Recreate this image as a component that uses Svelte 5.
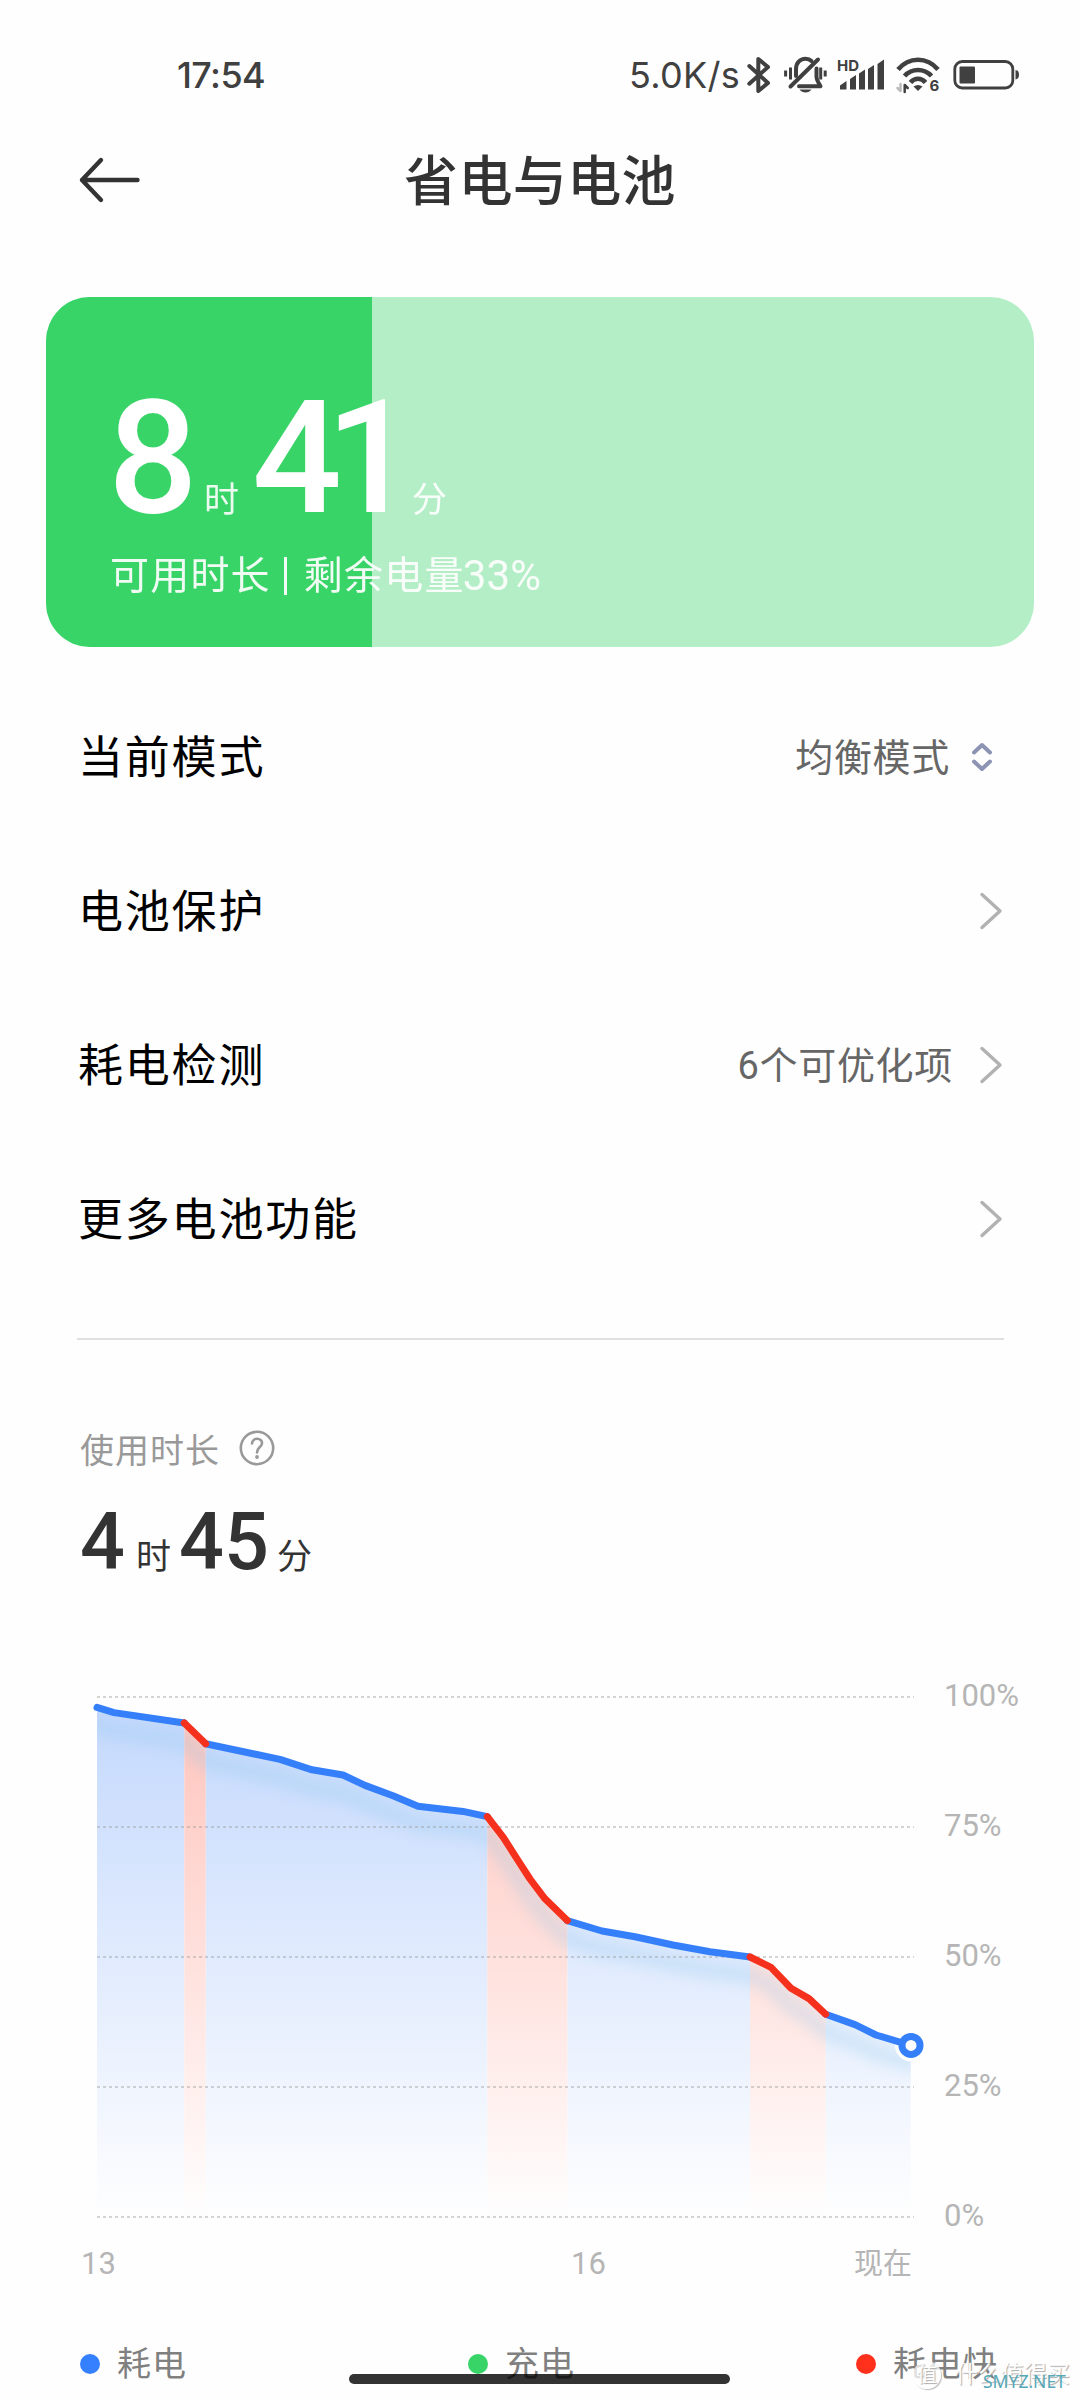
<script lang="ts">
    type Point = [number, number];
    type Segment = { fast: boolean; points: Point[] };

    const level = 33;

    const rows = [
        { label: '当前模式', value: '均衡模式', picker: true },
        { label: '电池保护', value: '', picker: false },
        { label: '耗电检测', value: '6个可优化项', picker: false },
        { label: '更多电池功能', value: '', picker: false },
    ];

    const ticks = [100, 75, 50, 25, 0];

    const legend = [
        { label: '耗电', kind: 'normal' },
        { label: '充电', kind: 'charge' },
        { label: '耗电快', kind: 'fast' },
    ];

    // [x in the plot, battery percent]
    const segments: Segment[] = [
        { fast: false, points: [[7, 98], [24, 97], [94.3, 95]] },
        { fast: false, points: [[115.7, 91], [190, 88], [222, 86], [253, 85], [275, 83], [303, 81], [328, 79], [373, 78], [397.3, 77]] },
        { fast: false, points: [[477.3, 57], [512, 55], [545, 53.9], [583, 52.3], [620, 51], [660, 50]] },
        { fast: false, points: [[735.7, 39], [765, 37], [786, 35], [820.7, 33]] },
        { fast: true, points: [[94.3, 95], [115.7, 91]] },
        { fast: true, points: [[397.3, 77], [413.3, 73], [428.3, 68.5], [440, 65], [455, 61.2], [477.3, 57]] },
        { fast: true, points: [[660, 50], [681, 48], [701, 44], [719, 42], [735.7, 39]] },
    ];

    const y = (percent: number) => 15 + (100 - percent) * 5.2;
    const line = (points: Point[]) => points.map(([px, p]) => `${px},${y(p)}`).join(' ');
    const area = (points: Point[]) =>
        `${points[0][0]},${y(0)} ${line(points)} ${points[points.length - 1][0]},${y(0)}`;

    const whole = segments
        .flatMap((s) => s.points)
        .sort((a, b) => a[0] - b[0]);
</script>

<div class="screen">
    <div class="status">
        <span class="time">17:54</span>
        <span class="speed">5.0K/s</span>
        <svg class="bluetooth" width="24" height="36" viewBox="0 0 24 36">
            <path d="M2.3 9 21 26 11.3 34V2l9.7 8L2.3 26.7" />
        </svg>
        <svg class="bell" width="43" height="36" viewBox="0 0 43 36">
            <path d="M6.5 29.5 34 2.5" />
            <path d="M12 19v-7c0-6 4-10.300 9.500-10.300 2.500 0 4.500.800 6 2.300" />
            <path d="M32.500 11.500V20c0 4 2.500 6 4 9.300H15" />
            <path class="solid" d="M15.500 32.500h12c-1.500 2-3.500 3-6 3s-4.500-1-6-3z" />
            <path class="thin" d="M1.600 13.500v6M6.500 10.500v12M36.700 10.500v12M41.200 13.500v6" />
        </svg>
        <svg class="signal" width="48" height="36" viewBox="0 0 48 36">
            <text x="-1" y="14">HD</text>
            <path class="solid" d="M2 32.500v-4l6.500-4.500v8.500zM12 32.500V22l6-4v14.500zM21 32.500v-16l6-4v20zM30 32.500V12l6-4v24.500zM39.500 32.500V7l6.500-4.500v30z" />
        </svg>
        <svg class="wifi" width="44" height="36" viewBox="0 0 44 36">
            <path class="wave" d="M2 12.500C13-.500 31-.500 42 12.500M8.500 19c7.500-8 19.500-8 27 0M14.500 25.500c4-5 11-5 15 0" />
            <path class="solid" d="M17.500 29.500c3-2 6-2 9 0L22 34z" />
            <path class="faint" d="M4.500 27v7L1.500 31" />
            <path class="arrow" d="M8.700 35v-7l3 3" />
            <text x="33.500" y="34">6</text>
        </svg>
        <svg class="battery" width="68" height="36" viewBox="0 0 68 36">
            <rect x="2.800" y="4.500" width="58" height="26.500" rx="7.500" />
            <rect class="solid" x="7.500" y="9.500" width="15.500" height="17" rx="1" />
            <path class="solid" d="M63.500 13c2.500.500 3.500 2 3.500 4.700s-1 4.300-3.500 4.800z" />
        </svg>
    </div>

    <header>
        <svg width="62" height="46" viewBox="0 0 62 46">
            <path d="M22 3 3 23l19 20M3 23h55.500" />
        </svg>
        <h1>省电与电池</h1>
    </header>

    <section class="card">
        <div class="fill" style="width: {level}%"></div>
        <div class="remaining">
            <span class="big">8</span>
            <span class="unit">时</span>
            <span class="big minutes">41</span>
            <span class="unit last">分</span>
        </div>
        <p>可用时长<span class="bar"></span>剩余电量<span class="percent">{level}%</span></p>
    </section>

    <ul class="rows">
        {#each rows as row}
            <li>
                <span class="label">{row.label}</span>
                <span class="value">{row.value}</span>
                {#if row.picker}
                    <svg class="updown" width="20" height="32" viewBox="0 0 20 32">
                        <path d="M2 11.500 10 4l8 7.500M2 20.500l8 7.500 8-7.500" />
                    </svg>
                {:else}
                    <svg class="chevron" width="24" height="40" viewBox="0 0 24 40">
                        <path d="M3 3.500 21 20 3 36.500" />
                    </svg>
                {/if}
            </li>
        {/each}
    </ul>

    <section class="usage">
        <div class="caption">
            使用时长
            <svg width="36" height="36" viewBox="0 0 36 36">
                <circle cx="18" cy="18" r="16.200" />
                <path d="M13 13.500c.300-6.500 10.500-6 10 0-.300 3.500-5 4-5 9" />
                <circle class="dot" cx="18" cy="27" r="1.900" />
            </svg>
        </div>
        <div class="duration">
            <span class="num">4</span>
            <span class="unit">时</span>
            <span class="num second">45</span>
            <span class="unit last">分</span>
        </div>
    </section>

    <section class="chart">
        <div class="plot">
            <svg width="850" height="550" viewBox="0 0 850 550">
                <defs>
                    <linearGradient id="blue" gradientUnits="userSpaceOnUse" x1="0" y1="15" x2="0" y2="535">
                        <stop offset="0" stop-color="#c3d8fd" />
                        <stop offset="1" stop-color="#fefefe" />
                    </linearGradient>
                    <linearGradient id="red" gradientUnits="userSpaceOnUse" x1="0" y1="15" x2="0" y2="535">
                        <stop offset="0" stop-color="#ffc3bb" />
                        <stop offset="1" stop-color="#fefefe" />
                    </linearGradient>
                    <filter id="soft" x="-5%" y="-10%" width="110%" height="130%">
                        <feGaussianBlur stdDeviation="7" />
                    </filter>
                    <clipPath id="under">
                        <polygon points={area(whole)} />
                    </clipPath>
                </defs>

                {#each segments as segment}
                    <polygon points={area(segment.points)} fill={segment.fast ? 'url(#red)' : 'url(#blue)'} />
                {/each}
                <g clip-path="url(#under)">
                    <polyline class="shadow" points={line(whole)} filter="url(#soft)" transform="translate(0 18)" />
                </g>
                {#each ticks as tick}
                    <path class="grid" d="M7 {y(tick)}H824" />
                {/each}
                <circle class="halo" cx="821" cy={y(level)} r="16" />
                {#each segments as segment}
                    <polyline class="line" class:fast={segment.fast} points={line(segment.points)} />
                {/each}
                <circle class="marker" cx="821" cy={y(level)} r="9" />
            </svg>
            <div class="y-axis">
                {#each ticks as tick}
                    <span>{tick}%</span>
                {/each}
            </div>
        </div>
        <div class="x-axis">
            <span>13</span>
            <span>16</span>
            <span class="now">现在</span>
        </div>
        <div class="legend">
            {#each legend as item}
                <span class="item"><i class={item.kind}></i>{item.label}</span>
            {/each}
        </div>
    </section>

    <div class="home"></div>

    <div class="watermark">
        <span class="badge">值</span>
        <span class="site">什么值得买</span>
        <span class="domain">SMYZ.NET</span>
    </div>
</div>

<style>
    :global(body) {
        background: #fefefe;
    }

    .screen {
        position: relative;
        display: flex;
        flex-direction: column;
        width: 1080px;
        height: 2400px;
        overflow: hidden;
        background: #fefefe;
        color: #333;
        font-family: Roboto, "Noto Sans CJK SC", sans-serif;
    }

    svg {
        flex: none;
        display: block;
        overflow: visible;
        fill: none;
        stroke-linecap: round;
        stroke-linejoin: round;
    }

    .status {
        display: flex;
        align-items: center;
        box-sizing: border-box;
        height: 100px;
        padding: 50px 60px 0 177px;
        color: #404040;
        font-family: Inter, sans-serif;
        font-size: 36px;
        line-height: 50px;

        & svg {
            stroke: #404040;
            stroke-width: 4;
        }

        & text {
            fill: #404040;
            stroke: none;
            font-size: 15px;
            font-weight: 700;
        }

        & .solid {
            fill: #404040;
            stroke: none;
        }
    }

    .time {
        width: 452px;
        font-weight: 500;
        letter-spacing: -0.6px;
    }

    .speed {
        width: 118px;
        letter-spacing: 0.3px;
        white-space: nowrap;
    }

    .bell {
        margin-left: 13px;

        & .thin {
            stroke-width: 3;
            stroke-linecap: butt;
        }
    }

    .signal {
        margin-left: 11px;
    }

    .wifi {
        margin-left: 10px;

        & .wave {
            stroke-width: 4.6;
            stroke-linecap: butt;
        }

        & .faint {
            stroke: #bbb;
            stroke-width: 2.5;
        }

        & .arrow {
            stroke-width: 2.5;
        }
    }

    .battery {
        margin-left: 12px;

        & rect:not(.solid) {
            stroke-width: 2.8;
        }
    }

    header {
        display: grid;
        grid-template-columns: 200px 1fr 200px;
        align-items: center;
        height: 160px;

        & svg {
            margin-left: 79px;
            stroke: #333;
            stroke-width: 4.4;
        }
    }

    h1 {
        margin: 5px 0 0;
        font-size: 54px;
        font-weight: 500;
        line-height: 80px;
        letter-spacing: 0.4px;
        text-align: center;
    }

    .card {
        position: relative;
        box-sizing: border-box;
        width: 988px;
        height: 350px;
        margin: 37px 0 0 46px;
        padding: 96px 0 0 62px;
        border-radius: 44px;
        overflow: hidden;
        background: #b3eec6;
        color: #fff;

        & p {
            position: relative;
            display: flex;
            align-items: center;
            margin: 28px 0 0 2px;
            font-size: 39px;
            line-height: 50px;
            letter-spacing: 1.2px;
            opacity: 0.92;
        }

        & .percent {
            margin-left: -2px;
            font-size: 42px;
            letter-spacing: 0.2px;
        }
    }

    .fill {
        position: absolute;
        inset: 0 auto 0 0;
        background: #38d468;
    }

    .remaining {
        position: relative;
        display: flex;
        align-items: baseline;
        height: 130px;
    }

    .big {
        width: 96px;
        font-size: 158px;
        font-weight: 500;
        line-height: 130px;
    }

    .minutes {
        width: 160px;
        letter-spacing: -16px;
    }

    .card .unit {
        width: 48px;
        font-size: 35px;
        line-height: 40px;
        opacity: 0.9;
    }

    .bar {
        width: 3px;
        height: 38px;
        margin: 0 17px 0 13px;
        background: #fff;
    }

    .rows {
        margin: 32px 76px 0 77px;
        padding: 0 0 43px;
        border-bottom: 2px solid #e0e0e0;
        list-style: none;

        & li {
            display: flex;
            align-items: center;
            height: 154px;
        }

        & svg {
            margin-top: 1px;
        }
    }

    .label {
        flex: 1;
        padding: 0 0 3px 1px;
        color: #000;
        font-size: 45px;
        letter-spacing: 1.8px;
    }

    .value {
        padding-bottom: 3px;
        color: #666;
        font-size: 38px;
        letter-spacing: 0.7px;
    }

    .updown {
        margin: 0 12px 0 22px;
        stroke: #8d93b3;
        stroke-width: 4;
    }

    .chevron {
        margin: 0 1px 0 26px;
        stroke: #b2b2b2;
        stroke-width: 3.4;
    }

    .usage {
        padding: 86px 0 0 80px;

        & .unit {
            width: 43px;
            font-size: 35px;
            line-height: 40px;
        }
    }

    .caption {
        display: flex;
        align-items: center;
        gap: 19px;
        height: 44px;
        color: #999;
        font-size: 34px;
        letter-spacing: 1px;

        & svg {
            stroke: #999;
            stroke-width: 2.6;
        }

        & .dot {
            fill: #999;
            stroke: none;
        }
    }

    .duration {
        display: flex;
        align-items: baseline;
        height: 80px;
        margin-top: 32px;
    }

    .num {
        width: 56px;
        font-size: 79px;
        font-weight: 500;
        line-height: 80px;
    }

    .second {
        width: 98px;
    }

    .chart {
        margin-top: 100px;
    }

    .plot {
        display: flex;
        padding-left: 90px;
    }

    .y-axis {
        display: flex;
        flex-direction: column;
        justify-content: space-between;
        margin: -1px 0 1px 4px;
    }

    .y-axis,
    .x-axis {
        color: #b5b5b5;
        font-size: 31px;
        line-height: 30px;
    }

    .shadow {
        stroke: #86c4ea;
        stroke-width: 16;
        opacity: 0.26;
    }

    .grid {
        stroke: #999;
        stroke-width: 1.6;
        stroke-dasharray: 3 3;
        stroke-linecap: butt;
        opacity: 0.55;
    }

    .line {
        stroke: #3580fa;
        stroke-width: 7;

        &.fast {
            stroke: #f5301c;
        }
    }

    .halo {
        fill: #fefefe;
    }

    .marker {
        fill: #fefefe;
        stroke: #3580fa;
        stroke-width: 7;
    }

    .x-axis {
        display: grid;
        grid-template-columns: 490px 283px auto;
        margin: 17px 0 0 81px;

        & .now {
            font-size: 29px;
        }
    }

    .legend {
        display: grid;
        grid-template-columns: repeat(3, 388px);
        margin: 63px 0 0 80px;
        color: #808080;
        font-size: 34px;
        line-height: 44px;
        letter-spacing: 1px;
    }

    .item {
        display: flex;
        align-items: center;
        gap: 17px;

        & i {
            width: 20px;
            height: 20px;
            border-radius: 50%;
        }

        & .normal {
            background: #3580ff;
        }

        & .charge {
            background: #38d468;
        }

        & .fast {
            background: #ff301c;
        }
    }

    .home {
        position: absolute;
        left: 349px;
        top: 2374px;
        width: 381px;
        height: 10px;
        border-radius: 5px;
        background: rgba(0, 0, 0, 0.8);
    }

    .watermark {
        position: absolute;
        left: 913px;
        top: 2361px;
        display: flex;
        align-items: center;
        gap: 14px;
        color: #fff;
        font-size: 23px;
        line-height: 28px;
        text-shadow: 1px 1px 1px #aaa;
        white-space: nowrap;
    }

    .badge {
        width: 28px;
        height: 28px;
        border-radius: 50%;
        background: rgba(255, 255, 255, 0.75);
        box-shadow: 1px 1px 1px #bbb;
        font-size: 20px;
        text-align: center;
    }

    .domain {
        position: absolute;
        left: 70px;
        top: 6px;
        color: #55a8b8;
        font-family: "Noto Sans", sans-serif;
        font-size: 17.5px;
        text-shadow: none;
    }
</style>
